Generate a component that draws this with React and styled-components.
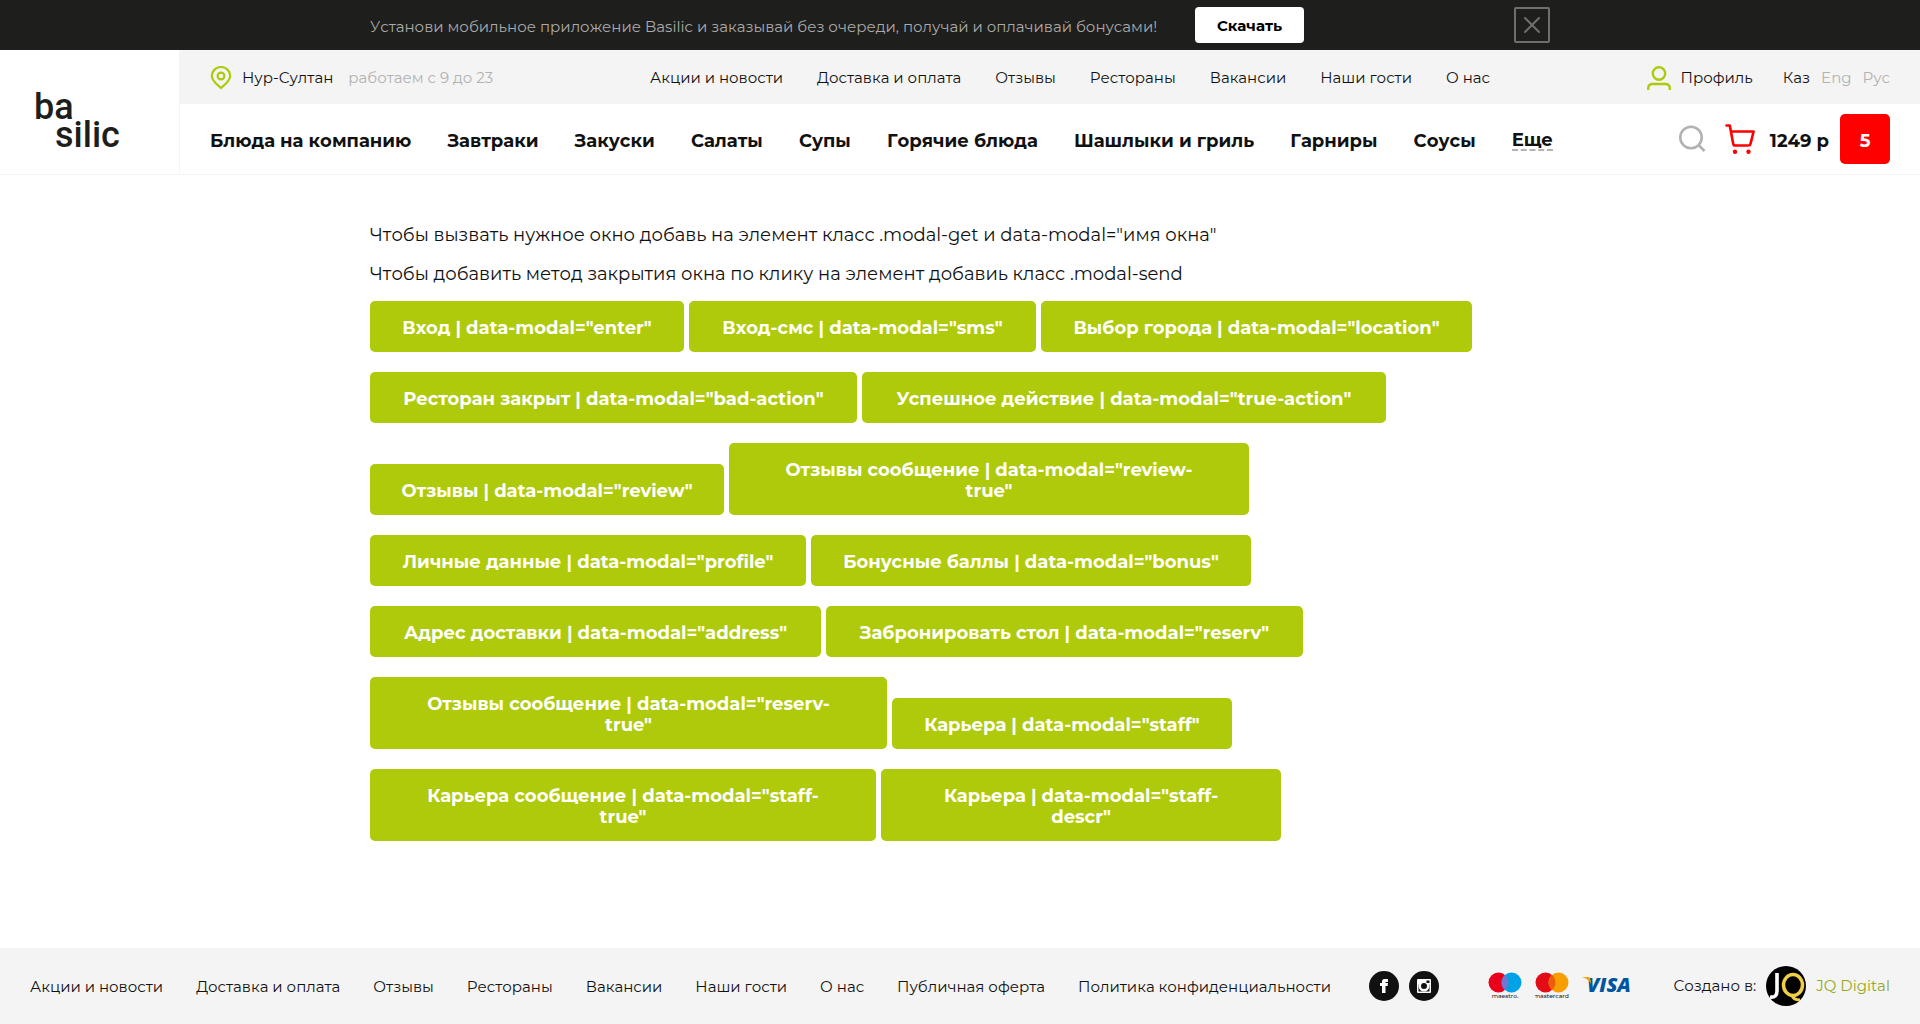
import React from "react";
import styled, { createGlobalStyle } from "styled-components";

const Global = createGlobalStyle`
  *, *::before, *::after { box-sizing: border-box; }
  body { margin: 0; background: #fff; color: #111; font: 400 15px/20px Montserrat, Inter, "Noto Sans", sans-serif; font-kerning: none; }
  a { color: inherit; text-decoration: none; white-space: nowrap; }
  button { font-family: inherit; border: 0; padding: 0; margin: 0; cursor: pointer; background: none; }
  svg { display: block; flex: none; }
`;
const Page = styled.div`min-height: 100vh; display: flex; flex-direction: column;`;
const Promo = styled.div`background: #1e1e1c;`;
const Container = styled.div`width: 100%; max-width: 1180px; margin: 0 auto;`;
const PromoRow = styled(Container)`display: flex; align-items: center; height: 50px; color: #aaa;`;
const PromoText = styled.p`margin: 0; flex: 0 0 825px; padding-top: 4px;`;
const Download = styled.button`width: 109px; height: 36px; border-radius: 4px; background: #fff; color: #000; font-size: 15px; font-weight: 700;`;
const Close = styled.button`margin-left: auto; width: 36px; height: 36px; border: 2px solid #706f6f; border-radius: 2px; display: grid; place-items: center; color: #706f6f;`;
const Header = styled.header`display: flex; height: 125px; border-bottom: 1px solid #f4f4f4;`;
const Logo = styled.a`
  width: 180px; border-right: 1px solid #f4f4f4; padding: 43px 0 0 34px;
  display: flex; flex-direction: column; color: #1e1e1c; font: 500 36px/28px Roboto, sans-serif;
`;
const LogoTail = styled.span`padding-left: 21px;`;
const HeaderMain = styled.div`flex: 1; min-width: 0;`;
const Bar = styled.div`display: flex; align-items: center; padding: 0 30px; height: ${p => p.$h}px; background: ${p => p.$bg || "none"};`;
const City = styled.div`display: flex; align-items: center; flex: 0 0 440px; gap: 10px; padding-top: 2px;`;
const Muted = styled.span`color: #b2b2b2; margin-left: 5px;`;
const Nav = styled.nav`display: flex; justify-content: space-between; padding-top: ${p => p.$top || 0}px; flex: 0 0 ${p => p.$w}px; font-size: ${p => p.$size || 15}px; font-weight: ${p => p.$weight || 400};`;
const More = styled.a`border-bottom: 2px dashed #b2b2b2; line-height: 18px;`;
const Account = styled.div`margin-left: auto; display: flex; align-items: center; gap: 10px; padding-top: 2px;`;
const Langs = styled.div`display: flex; gap: 11px; margin-left: 20px; a + a { color: #b2b2b2; }`;
const Shop = styled.div`margin-left: auto; display: flex; align-items: center; font-size: 18px; font-weight: 700;`;
const Cart = styled.a`display: flex; align-items: center; gap: 15px; margin: 0 11px 0 19px;`;
const Price = styled.span`padding-top: 4px;`;
const Count = styled.button`width: 50px; height: 50px; border-radius: 5px; background: #f00; color: #fff; font-size: 18px; font-weight: 700; padding-top: 4px;`;
const Main = styled(Container).attrs({ as: "main" })`flex: 1; padding: 46px 0 107px; font-size: 18px;`;
const Note = styled.p`margin: 0 0 11px; line-height: 28px;`;
const Buttons = styled.div`display: flex; flex-wrap: wrap; align-items: flex-end; gap: 20px 5px; padding-top: 2px;`;
const ModalButton = styled.button`width: ${p => p.$w}px; padding: 17px ${p => (p.$wide ? 44 : 20)}px 13px; border-radius: 5px; background: #afca0a; color: #fff; font-size: 18px; font-weight: 700; line-height: 21px;`;
const Footer = styled.footer`height: 76px; background: #f4f4f4; display: flex; align-items: center; padding: 0 30px;`;
const Icons = styled.div`display: flex; align-items: center; gap: ${p => p.$gap}px; margin-left: ${p => p.$ml}px;`;
const Credit = styled.div`margin-left: auto; display: flex; align-items: center; gap: 10px; a { color: #95a920; }`;

const links = ["Акции и новости", "Доставка и оплата", "Отзывы", "Рестораны", "Вакансии", "Наши гости", "О нас"];
const menu = ["Блюда на компанию", "Завтраки", "Закуски", "Салаты", "Супы", "Горячие блюда", "Шашлыки и гриль", "Гарниры", "Соусы"];
const modals = [
  ["Вход", "enter", 314], ["Вход-смс", "sms", 347], ["Выбор города", "location", 431],
  ["Ресторан закрыт", "bad-action", 487], ["Успешное действие", "true-action", 524],
  ["Отзывы", "review", 354], ["Отзывы сообщение", "review-true", 520, true],
  ["Личные данные", "profile", 436], ["Бонусные баллы", "bonus", 440],
  ["Адрес доставки", "address", 451], ["Забронировать стол", "reserv", 477],
  ["Отзывы сообщение", "reserv-true", 517, true], ["Карьера", "staff", 340],
  ["Карьера сообщение", "staff-true", 506, true], ["Карьера", "staff-descr", 400, true],
];

export default function App() {
  return (
    <Page>
      <Global />
      <Promo>
        <PromoRow>
          <PromoText>Установи мобильное приложение Basilic и заказывай без очереди, получай и оплачивай бонусами!</PromoText>
          <Download>Скачать</Download>
          <Close aria-label="Закрыть">
            <svg width="16" height="16" viewBox="0 0 16 16" stroke="currentColor" strokeWidth="2" strokeLinecap="round"><path d="M1 1l14 14M15 1L1 15" /></svg>
          </Close>
        </PromoRow>
      </Promo>
      <Header>
        <Logo href="#"><span>ba</span><LogoTail>silic</LogoTail></Logo>
        <HeaderMain>
          <Bar $h={54} $bg="#f4f4f4">
            <City>
              <svg width="22" height="24" viewBox="0 0 22 24" fill="none" stroke="#afca0a" strokeWidth="2.2"><path d="M11 22C7 18.500 1.800 15 1.800 10a9.200 9 0 0 1 18.400 0c0 5-5.200 8.500-9.200 12z" /><circle cx="11" cy="10" r="3.400" /></svg>
              <a href="#">Нур-Султан</a><Muted>работаем с 9 до 23</Muted>
            </City>
            <Nav $w={840} $top={2}>{links.map(t => <a href="#" key={t}>{t}</a>)}</Nav>
            <Account>
              <svg width="24" height="24" viewBox="0 0 24 24" fill="none" stroke="#afca0a" strokeWidth="2.4"><circle cx="12" cy="7.500" r="6.200" /><path d="M1.200 24v-1.500c0-3 1.800-4.500 4.500-4.500h12.600c2.700 0 4.500 1.500 4.500 4.500V24" /></svg>
              <a href="#">Профиль</a>
              <Langs><a href="#">Каз</a><a href="#">Eng</a><a href="#">Рус</a></Langs>
            </Account>
          </Bar>
          <Bar $h={70}>
            <Nav $w={1343} $top={4} $size={18} $weight={700}>
              {menu.map(t => <a href="#" key={t}>{t}</a>)}<More href="#">Еще</More>
            </Nav>
            <Shop>
              <svg width="28" height="28" viewBox="0 0 28 28" fill="none" stroke="#b2b2b2" strokeWidth="2.6"><circle cx="13" cy="12.500" r="10.700" /><path d="M20.500 20l6 6" /></svg>
              <Cart href="#">
                <svg width="30" height="30" viewBox="0 0 30 30" fill="none" stroke="#f00" strokeWidth="2.600" strokeLinecap="round" strokeLinejoin="round"><path d="M1.500 1.500h3.300l3.400 18.200q.3 1.800 2 1.800h13.200q1.700 0 2.100-1.600L28.600 7.500H6" /><circle cx="10" cy="27.800" r="2.200" fill="#f00" stroke="none" /><circle cx="23.500" cy="27.800" r="2.200" fill="#f00" stroke="none" /></svg>
                <Price>1249 р</Price>
              </Cart>
              <Count>5</Count>
            </Shop>
          </Bar>
        </HeaderMain>
      </Header>
      <Main>
        <Note>Чтобы вызвать нужное окно добавь на элемент класс .modal-get и data-modal="имя окна"</Note>
        <Note>Чтобы добавить метод закрытия окна по клику на элемент добавиь класс .modal-send</Note>
        <Buttons>{modals.map(([t, m, w, wide]) => <ModalButton key={m} $w={w} $wide={wide} data-modal={m}>{`${t} | data-modal="${m}"`}</ModalButton>)}</Buttons>
      </Main>
      <Footer>
        <Nav $w={1301} $top={2}>{[...links, "Публичная оферта", "Политика конфиденциальности"].map(t => <a href="#" key={t}>{t}</a>)}</Nav>
        <Icons $gap={10} $ml={38}>
          <a href="#" aria-label="Facebook"><svg width="30" height="30" viewBox="0 0 30 30"><circle cx="15" cy="15" r="15" fill="#111" /><path fill="#fff" d="M13 22v-7h-2v-3h2v-1.500C13 8.500 14.500 8 16 8h3v3h-1.800c-.7 0-.7.300-.7 1H19l-.4 3h-2.100v7z" /></svg></a>
          <a href="#" aria-label="Instagram"><svg width="30" height="30" viewBox="0 0 30 30"><circle cx="15" cy="15" r="15" fill="#111" /><rect x="8" y="8" width="14" height="14" rx="1" fill="#fff" /><path fill="#111" d="M9.500 13.500h11v7h-11z" /><circle cx="15" cy="15" r="5.500" fill="#fff" /><circle cx="15" cy="15" r="3" fill="#111" /><path fill="#111" d="M17.500 9.500h3V12h-3z" /></svg></a>
        </Icons>
        <Icons $gap={13} $ml={49}>
          <svg width="34" height="28" viewBox="0 0 34 28"><circle cx="10.500" cy="10.500" r="10" fill="#eb001b" /><circle cx="23.500" cy="10.500" r="10" fill="#00a2e5" /><path d="M17 3a10 10 0 0 1 0 15a10 10 0 0 1 0-15" fill="#7375cf" /><text x="17" y="26" textAnchor="middle" fontSize="6" fontWeight="500" fill="#222">maestro.</text></svg>
          <svg width="34" height="28" viewBox="0 0 34 28"><circle cx="10.500" cy="10.500" r="10" fill="#e30b17" /><circle cx="23.500" cy="10.500" r="10" fill="#f79e00" /><path d="M17 3a10 10 0 0 1 0 15a10 10 0 0 1 0-15" fill="#eb5e0b" /><text x="17" y="26" textAnchor="middle" fontSize="6" fontWeight="500" fill="#111">mastercard.</text></svg>
          <svg width="52" height="28" viewBox="0 0 52 28"><text x="5" y="20" fontFamily="Open Sans, sans-serif" fontSize="20" fontWeight="800" fontStyle="italic" fill="#0055a0">VISA</text><path d="M0 5h6c2 0 2.500 1 3.200 7C7 8 4 6 0 5z" fill="#f79e00" /></svg>
        </Icons>
        <Credit>
          <span>Создано в:</span>
          <svg width="40" height="40" viewBox="0 0 40 40"><circle cx="20" cy="20" r="20" /><path d="M4 31q7 1 7-6V7" fill="none" stroke="#fff" strokeWidth="3.600" /><ellipse cx="27" cy="19" rx="9.500" ry="10.500" fill="none" stroke="#efcf45" strokeWidth="3.500" /><path d="M26 29q1 5 8 5" fill="none" stroke="#efcf45" strokeWidth="3" /></svg>
          <a href="#">JQ Digital</a>
        </Credit>
      </Footer>
    </Page>
  );
}
